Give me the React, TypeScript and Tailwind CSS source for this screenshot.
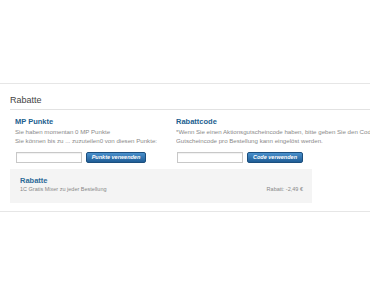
export default function App() {
  const font = { fontFamily: '"Liberation Sans", Arial, sans-serif' };

  return (
    <div className="h-[297px] w-[370px] overflow-hidden bg-white pt-[83px]" style={font}>
      <section className="border-y border-[#e6e6e6] pb-[8px]">
        {/* Titel */}
        <div className="ml-[10px] border-b border-[#e2e2e2] pt-[10px] pb-[3px]">
          <h2 className="text-[9px] leading-[12px] text-[#444]">Rabatte</h2>
        </div>

        {/* Zwei Spalten */}
        <div className="flex pt-[7px]">
          <div className="w-[176px] shrink-0 pl-[15px]">
            <h3 className="text-[7.5px] font-bold leading-[10px] text-[#22608f]">MP Punkte</h3>
            <p className="whitespace-nowrap text-[6.15px] leading-[9px] text-[#8a8a8a]">
              Sie haben momentan 0 MP Punkte
            </p>
            <p className="whitespace-nowrap text-[6.15px] leading-[9px] text-[#8a8a8a]">
              Sie können bis zu ... zuzuteilen0 von diesen Punkte:
            </p>
            <div className="mt-[7px] flex items-center gap-[4px] pl-px">
              <input className="h-[11px] w-[66px] border border-[#c8c8c8] bg-white shadow-[inset_0_1px_1px_rgba(0,0,0,0.06)] outline-none" />
              <button className="h-[11px] w-[60px] rounded-[2px] border border-[#1c4f7e] bg-gradient-to-b from-[#4a90cc] to-[#1f5d96] text-[5.5px] font-bold italic leading-[9px] text-white">
                Punkte verwenden
              </button>
            </div>
          </div>

          <div className="min-w-0 flex-1 overflow-hidden">
            <h3 className="text-[7.5px] font-bold leading-[10px] text-[#22608f]">Rabattcode</h3>
            <p className="whitespace-nowrap text-[6.15px] leading-[9px] text-[#8a8a8a]">
              *Wenn Sie einen Aktionsgutscheincode haben, bitte geben Sie den Code hier ein. Nur ein
            </p>
            <p className="whitespace-nowrap text-[6.15px] leading-[9px] text-[#8a8a8a]">
              Gutscheincode pro Bestellung kann eingelöst werden.
            </p>
            <div className="mt-[7px] flex items-center gap-[4px] pl-px">
              <input className="h-[11px] w-[66px] border border-[#c8c8c8] bg-white shadow-[inset_0_1px_1px_rgba(0,0,0,0.06)] outline-none" />
              <button className="h-[11px] w-[56px] rounded-[2px] border border-[#1c4f7e] bg-gradient-to-b from-[#4a90cc] to-[#1f5d96] text-[5.5px] font-bold italic leading-[9px] text-white">
                Code verwenden
              </button>
            </div>
          </div>
        </div>

        {/* Rabatt-Box */}
        <div className="ml-[10px] mt-[6px] flex h-[34px] w-[302px] items-end justify-between bg-[#f4f4f4] pr-[9px] pl-[10px] pb-[10px]">
          <div>
            <div className="text-[7.5px] font-bold leading-[10px] text-[#2c6a98]">Rabatte</div>
            <div className="text-[5.5px] leading-[7px] text-[#888]">1C Gratis Mixer zu jeder Bestellung</div>
          </div>
          <div className="text-[5.5px] leading-[7px] text-[#888]">Rabatt: -2,49 €</div>
        </div>
      </section>
    </div>
  );
}
